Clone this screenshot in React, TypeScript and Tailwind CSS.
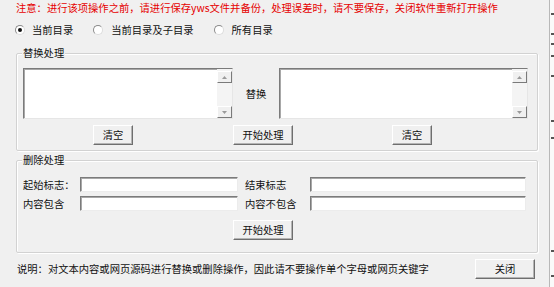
import React from "react";

const font = { fontFamily: '"Noto Sans CJK SC", "Noto Sans", sans-serif' };

function Btn({ children, w, className = "" }: { children: React.ReactNode; w: string; className?: string }) {
  return (
    <div
      className={`${w} h-[20px] flex items-center justify-center bg-[#f0f0f0] border border-t-white border-l-white border-r-[#6e6e6e] border-b-[#6e6e6e] shadow-[inset_-1px_-1px_0_#b4b4b4] text-[10.3px] leading-[12px] text-[#111] ${className}`}
    >
      {children}
    </div>
  );
}

function Radio({ checked }: { checked?: boolean }) {
  return (
    <div className="w-[10px] h-[10px] rounded-full bg-white border border-t-[#8a8a8a] border-l-[#8a8a8a] border-r-[#dcdcdc] border-b-[#dcdcdc] flex items-center justify-center">
      {checked && <div className="w-[4px] h-[4px] rounded-full bg-[#111]" />}
    </div>
  );
}

function ScrollBtn({ up }: { up?: boolean }) {
  return (
    <div className="w-[15px] h-[12px] bg-[#f0f0f0] border border-t-white border-l-white border-r-[#7a7a7a] border-b-[#7a7a7a] flex items-center justify-center">
      <svg width="5" height="3" viewBox="0 0 5 3">
        {up ? <path d="M0 3 L2.5 0 L5 3 Z" fill="#9a9a9a" /> : <path d="M0 0 L2.5 3 L5 0 Z" fill="#9a9a9a" />}
      </svg>
    </div>
  );
}

function TextArea({ w }: { w: string }) {
  return (
    <div className={`${w} h-[51px] bg-white border border-t-[#7b7b7b] border-l-[#7b7b7b] border-r-[#e6e6e6] border-b-[#e6e6e6] shadow-[inset_1px_1px_0_#a8a8a8] flex justify-end`}>
      <div className="w-[15px] h-full bg-[#f4f4f4] flex flex-col justify-between pt-[2px] pb-[0px]">
        <ScrollBtn up />
        <ScrollBtn />
      </div>
    </div>
  );
}

function Input({ w }: { w: string }) {
  return (
    <div className={`${w} h-[15px] bg-white border border-t-[#7b7b7b] border-l-[#7b7b7b] border-r-[#ececec] border-b-[#ececec] shadow-[inset_1px_1px_0_#a8a8a8]`} />
  );
}

function Group({ title, h, children }: { title: string; h: string; children: React.ReactNode }) {
  return (
    <div className={`relative ml-[16px] w-[522px] ${h} border border-[#d2d2d2] rounded-[2px] shadow-[inset_1px_1px_0_#ffffff,1px_1px_0_#ffffff] pl-[6px]`}>
      <span className="absolute left-[5px] top-[-7px] bg-[#f0f0f0] px-[1px] text-[10.3px] leading-[12px] text-[#111]">
        {title}
      </span>
      {children}
    </div>
  );
}

export default function App() {
  const marks = [13, 33, 43, 55, 75, 120, 137, 250, 275];
  return (
    <div className="w-[554px] h-[287px] bg-[#f0f0f0] flex overflow-hidden" style={font}>
      <div className="w-[549px] h-full flex flex-col">
        <div className="pt-[2px] pl-[16px] text-[10.3px] leading-[12px] text-[#e60000] whitespace-nowrap">
          注意：进行该项操作之前，请进行保存yws文件并备份，处理误差时，请不要保存，关闭软件重新打开操作
        </div>
        <div className="mt-[9px] h-[14px] flex items-center text-[10.3px] leading-[12px] text-[#111]">
          <div className="ml-[15px]"><Radio checked /></div>
          <span className="ml-[7px]">当前目录</span>
          <div className="ml-[20px]"><Radio /></div>
          <span className="ml-[8px]">当前目录及子目录</span>
          <div className="ml-[20px]"><Radio /></div>
          <span className="ml-[8px]">所有目录</span>
        </div>

        <div className="mt-[16px]">
          <Group title="替换处理" h="h-[98px]">
            <div className="pt-[14px] flex items-center">
              <TextArea w="w-[210px]" />
              <div className="w-[46px] text-center text-[10.3px] leading-[12px] text-[#111]">替换</div>
              <TextArea w="w-[249px]" />
            </div>
            <div className="mt-[6px] flex">
              <Btn w="w-[40px]" className="ml-[70px]">清空</Btn>
              <Btn w="w-[60px]" className="ml-[100px]">开始处理</Btn>
              <Btn w="w-[40px]" className="ml-[99px]">清空</Btn>
            </div>
          </Group>
        </div>

        <div className="mt-[9px]">
          <Group title="删除处理" h="h-[93px]">
            <div className="pt-[16px] flex items-center text-[10.3px] leading-[12px] text-[#111]">
              <span className="w-[57px]">起始标志：</span>
              <Input w="w-[158px]" />
              <span className="ml-[7px] w-[65px]">结束标志</span>
              <Input w="w-[216px]" />
            </div>
            <div className="mt-[4px] flex items-center text-[10.3px] leading-[12px] text-[#111]">
              <span className="w-[57px]">内容包含</span>
              <Input w="w-[158px]" />
              <span className="ml-[7px] w-[65px]">内容不包含</span>
              <Input w="w-[216px]" />
            </div>
            <div className="mt-[9px] flex">
              <Btn w="w-[60px]" className="ml-[210px]">开始处理</Btn>
            </div>
          </Group>
        </div>

        <div className="mt-[6px] flex items-center">
          <span className="pl-[17px] text-[10.3px] leading-[12px] text-[#111] whitespace-nowrap">
            说明：对文本内容或网页源码进行替换或删除操作，因此请不要操作单个字母或网页关键字
          </span>
          <Btn w="w-[60px]" className="ml-auto mr-[14px]">关闭</Btn>
        </div>
      </div>
      <div className="relative w-[5px] h-full border-l border-[#b8b8b8] bg-[#fafafa]">
        {marks.map((y) => (
          <div key={y} className="absolute left-[1px] w-[3px] h-[2px] bg-[#555]" style={{ top: y }} />
        ))}
      </div>
    </div>
  );
}
